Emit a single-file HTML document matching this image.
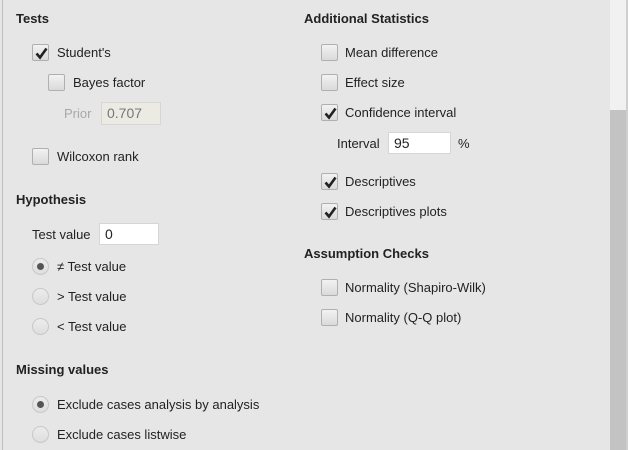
<!DOCTYPE html>
<html><head><style>
body{margin:0;width:628px;height:450px;overflow:hidden;background:#e6e6e6;font-family:"Liberation Sans",sans-serif;font-size:13px;color:#222;position:relative}
.a{position:absolute;white-space:nowrap;line-height:16px}
.b{font-weight:bold}
.cb{position:absolute;width:17px;height:17px;border:1px solid #b0b0b0;border-radius:2px;background:linear-gradient(#f2f2f2,#dadada);box-sizing:border-box}
.cb svg{position:absolute;left:1px;top:1px}
.rd{position:absolute;width:17px;height:17px;border:1px solid #c8c8c8;border-radius:50%;background:linear-gradient(#ececec,#dedede);box-sizing:border-box}
.rd.on::after{content:"";position:absolute;left:4px;top:4px;width:7px;height:7px;border-radius:50%;background:#555}
.in{position:absolute;background:#fff;border:1px solid #d6d6d6;box-sizing:border-box;padding-left:5px;line-height:20px;font-size:14px}
</style></head><body>
<div style="position:absolute;left:2px;top:0;width:1px;height:450px;background:#bdbdbd"></div>
<div style="position:absolute;left:610px;top:0;width:16px;height:110px;background:#f1f1f1"></div>
<div style="position:absolute;left:610px;top:110px;width:16px;height:340px;background:#c3c3c3"></div>
<div style="position:absolute;left:626px;top:0;width:2px;height:450px;background:#cfcfcf"></div>

<div class="a b" style="left:16px;top:11px">Tests</div>
<div class="cb" style="left:32px;top:44px"><svg width="15" height="15"><path d="M2.5 7.5 L6 11.5 L12.5 2.5" stroke="#222" stroke-width="2.6" fill="none"/></svg></div>
<div class="a" style="left:57px;top:45px">Student's</div>
<div class="cb" style="left:48px;top:74px"></div>
<div class="a" style="left:73px;top:75px">Bayes factor</div>
<div class="a" style="left:64px;top:106px;color:#a8a8a8">Prior</div>
<div class="in" style="left:101px;top:102px;width:60px;height:23px;background:#ebebe4;color:#777">0.707</div>
<div class="cb" style="left:32px;top:148px"></div>
<div class="a" style="left:57px;top:149px">Wilcoxon rank</div>

<div class="a b" style="left:16px;top:192px">Hypothesis</div>
<div class="a" style="left:32px;top:227px">Test value</div>
<div class="in" style="left:99px;top:223px;width:60px;height:22px">0</div>
<div class="rd on" style="left:32px;top:258px"></div>
<div class="a" style="left:57px;top:259px">≠ Test value</div>
<div class="rd" style="left:32px;top:288px"></div>
<div class="a" style="left:57px;top:289px">&gt; Test value</div>
<div class="rd" style="left:32px;top:318px"></div>
<div class="a" style="left:57px;top:319px">&lt; Test value</div>

<div class="a b" style="left:16px;top:362px">Missing values</div>
<div class="rd on" style="left:32px;top:396px"></div>
<div class="a" style="left:57px;top:397px">Exclude cases analysis by analysis</div>
<div class="rd" style="left:32px;top:426px"></div>
<div class="a" style="left:57px;top:427px">Exclude cases listwise</div>

<div class="a b" style="left:304px;top:11px">Additional Statistics</div>
<div class="cb" style="left:321px;top:44px"></div>
<div class="a" style="left:345px;top:45px">Mean difference</div>
<div class="cb" style="left:321px;top:74px"></div>
<div class="a" style="left:345px;top:75px">Effect size</div>
<div class="cb" style="left:321px;top:104px"><svg width="15" height="15"><path d="M2.5 7.5 L6 11.5 L12.5 2.5" stroke="#222" stroke-width="2.6" fill="none"/></svg></div>
<div class="a" style="left:345px;top:105px">Confidence interval</div>
<div class="a" style="left:337px;top:136px">Interval</div>
<div class="in" style="left:388px;top:132px;width:63px;height:22px">95</div>
<div class="a" style="left:458px;top:136px">%</div>
<div class="cb" style="left:321px;top:173px"><svg width="15" height="15"><path d="M2.5 7.5 L6 11.5 L12.5 2.5" stroke="#222" stroke-width="2.6" fill="none"/></svg></div>
<div class="a" style="left:345px;top:174px">Descriptives</div>
<div class="cb" style="left:321px;top:203px"><svg width="15" height="15"><path d="M2.5 7.5 L6 11.5 L12.5 2.5" stroke="#222" stroke-width="2.6" fill="none"/></svg></div>
<div class="a" style="left:345px;top:204px">Descriptives plots</div>

<div class="a b" style="left:304px;top:246px">Assumption Checks</div>
<div class="cb" style="left:321px;top:279px"></div>
<div class="a" style="left:345px;top:280px">Normality (Shapiro-Wilk)</div>
<div class="cb" style="left:321px;top:309px"></div>
<div class="a" style="left:345px;top:310px">Normality (Q-Q plot)</div>
</body></html>
